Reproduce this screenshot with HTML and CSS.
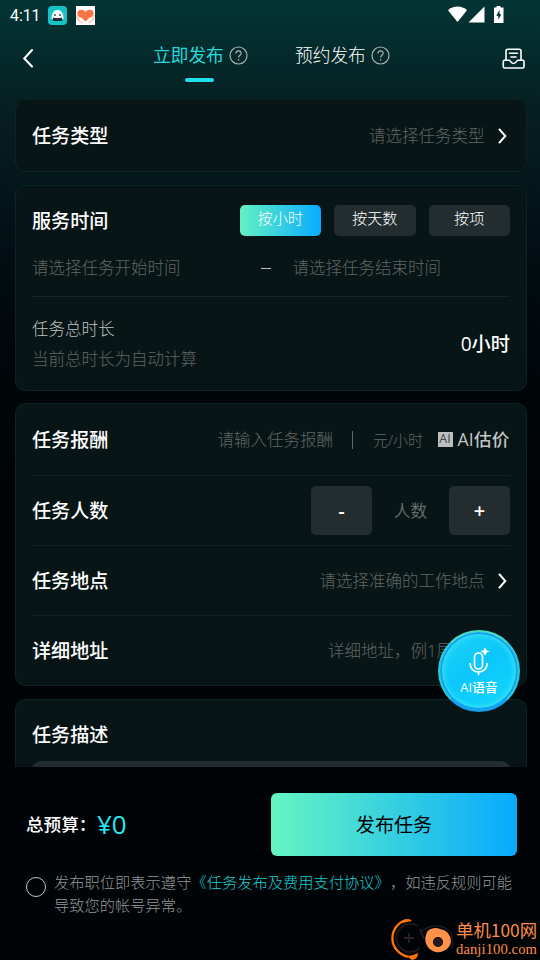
FILE: index.html
```html
<!DOCTYPE html>
<html lang="zh-CN">
<head>
<meta charset="utf-8">
<title>发布任务</title>
<link rel="stylesheet" href="styles.css">
</head>
<body>
<div class="screen">
  <div class="status">
    <span class="clock">4:11</span>
    <svg class="app-icon" width="19" height="19" viewBox="0 0 19 19"><rect width="19" height="19" rx="4" fill="#15c3c5"/><path d="M3.500 12.500C3.500 7 6 4 9.500 4S15.500 7 15.500 12.500L13 14H6Z" fill="#fff"/><path d="M5.300 11.500Q9.500 13 13.700 11.500L14.500 15H4.500Z" fill="#12292b"/><path d="M7 8v2M12 8v2" stroke="#12292b" stroke-width="1.200"/></svg>
    <svg class="app-icon app-heart" width="19" height="19" viewBox="0 0 19 19"><rect width="19" height="19" fill="#fff"/><path d="M9.500 15.500C6 12.500 1.300 11 1.300 7 1.300 3 7.500 2.500 9.500 6 11.500 2.500 17.700 3 17.700 7 17.700 11 13 12.500 9.500 15.500Z" fill="#f97445"/><path d="M1 9C1 12 2 15 6.500 17M18 9C18 12 17 15 12.500 17" stroke="#fbb596" stroke-width="1.200" fill="none"/><path d="M4.500 11.500 8 15 7.500 18M14.500 11.500 11 15 11.500 18" stroke="#fff" stroke-width="1.100" fill="none"/></svg>
    <svg class="signals" width="58" height="18" viewBox="0 0 58 18"><path d="M0 4.200C5 -.6 14 -.6 19 4.200L9.500 16Z" fill="#fff"/><path d="M20.500 16.500 36.500 .5V16.500Z" fill="#fff"/><path d="M48.500 0h4v1.500h3V17h-9.500V1.500h2.500Z" fill="#fff"/><path d="M51.500 4 48.300 9.700H50.300V13.700L53.300 8.200H51.500Z" fill="#07292a"/></svg>
  </div>
  <header class="nav">
    <svg class="back" width="14" height="20" viewBox="0 0 14 20"><path d="M12 2 4.300 10.500 12 18.500" fill="none" stroke="#fff" stroke-width="2.100" stroke-linecap="round"/></svg>
    <div class="tab tab-on"><span>立即发布</span><svg width="19" height="19" viewBox="0 0 19 19"><circle cx="9.500" cy="9.500" r="8.500"/><path d="M6.900 7.600C6.900 3.900 12.200 4.100 12.200 7.300 12.200 9.300 9.600 9.300 9.600 11.500"/><path d="M9.600 13v1.600"/></svg></div>
    <div class="tab"><span>预约发布</span><svg width="19" height="19" viewBox="0 0 19 19"><circle cx="9.500" cy="9.500" r="8.500"/><path d="M6.900 7.600C6.900 3.900 12.200 4.100 12.200 7.300 12.200 9.300 9.600 9.300 9.600 11.500"/><path d="M9.600 13v1.600"/></svg></div>
    <svg class="inbox" width="24" height="22" viewBox="0 0 24 22"><path d="M4 12.300V3Q4 1.200 5.800 1.200H17.200Q19 1.200 19 3V12.300M7.500 5.300H15.500M9 9H14M1.300 13.500Q1.300 12.300 2.500 12.300H7.200C8.500 12.300 8.500 15.500 11.500 15.500S14.500 12.300 15.800 12.300H20.800Q22 12.300 22 13.500V18.500Q22 20 20.500 20H2.800Q1.300 20 1.300 18.500Z"/></svg>
  </header>

  <main class="form">
    <section class="card card-type">
      <h2>任务类型</h2>
      <span class="hint">请选择任务类型</span>
      <svg class="chev" width="9" height="16" viewBox="0 0 9 16"><path d="M1 .8 7.300 8 1 15.200"/></svg>
    </section>

    <section class="card card-time">
      <div class="time-head">
        <h2>服务时间</h2>
        <button class="chip chip-on">按小时</button>
        <button class="chip">按天数</button>
        <button class="chip">按项</button>
      </div>
      <div class="range"><span class="hint">请选择任务开始时间</span><i class="dash"></i><span class="hint">请选择任务结束时间</span></div>
      <div class="total">
        <div class="total-text"><p>任务总时长</p><p class="hint">当前总时长为自动计算</p></div>
        <strong>0小时</strong>
      </div>
    </section>

    <section class="card card-detail">
      <div class="row"><h2>任务报酬</h2><span class="hint">请输入任务报酬</span><i class="bar"></i><span class="hint unit">元/小时</span><span class="ai-box">AI</span><span class="ai-text">AI估价</span></div>
      <div class="row"><h2>任务人数</h2><button class="step">-</button><span class="count">人数</span><button class="step">+</button></div>
      <div class="row"><h2>任务地点</h2><span class="hint">请选择准确的工作地点</span><svg class="chev" width="9" height="16" viewBox="0 0 9 16"><path d="M1 .8 7.300 8 1 15.200"/></svg></div>
      <div class="row"><h2>详细地址</h2><span class="hint address">详细地址，例1层101室</span></div>
    </section>

    <section class="card card-desc"><h2>任务描述</h2><div class="area"></div></section>
  </main>

  <footer class="foot">
    <div class="pay"><span class="budget">总预算：</span><span class="price">¥0</span><button class="submit">发布任务</button></div>
    <div class="agree"><i class="radio"></i><p>发布职位即表示遵守<a>《任务发布及费用支付协议》</a>，如违反规则可能导致您的帐号异常。</p></div>
  </footer>

  <div class="voice">
    <svg width="24" height="30" viewBox="0 0 24 30"><rect x="7.500" y="5" width="8" height="16" rx="4"/><path d="M3.200 15.500C3.200 27 20 27 20 15.500M11.600 24.500V26.500"/><path class="spark" d="M18 -.8 19.500 2.200 22.500 3.500 19.500 4.800 18 7.800 16.500 4.800 13.500 3.500 16.500 2.200Z"/></svg>
    <span>AI语音</span>
  </div>

  <div class="mark">
    <svg width="64" height="43" viewBox="0 0 64 43"><g fill="none"><path d="M28 9A14 14 0 1 0 30 31" stroke="#1e1718" stroke-width="2"/><path d="M30 12Q32 17 34 22M19 16v10M14 21h10" stroke="#2b2020" stroke-width="1.800"/><path d="M32 14Q46 4 58 13Q64 18 62 31" stroke="#20191a" stroke-width="1.500"/><path d="M16 3C-2 9 -3 34 18 40" stroke="#ff7408" stroke-width="2.300"/></g><path d="M10 6Q18 -1 22 4L12 6ZM15 38Q21 40 28 36Q28 42 22 43Z" fill="#ff7408"/><path fill-rule="evenodd" d="M41 12Q46 10 50 12Q61 14 61 25A13 13 0 1 1 36 18Q37 13 41 12ZM48 20A5 5 0 1 0 48 30A5 5 0 1 0 48 20Z" fill="#ff9148"/><circle cx="48" cy="25" r="4.300" fill="#281a18"/></svg>
    <div class="mark-text"><b>单机100网</b><span>danji100.com</span></div>
  </div>
</div>
</body>
</html>
```
FILE: styles.css
```css
* { box-sizing: border-box; margin: 0; padding: 0; }
body { background: #000407; }
button { border: 0; font: inherit; color: inherit; }
.screen {
  position: relative;
  width: 540px;
  height: 960px;
  overflow: hidden;
  display: flex;
  flex-direction: column;
  font-family: "Open Sans", "Noto Sans CJK SC", sans-serif;
  font-weight: 300;
  font-size: 16.5px;
  line-height: 24px;
  white-space: nowrap;
  text-spacing-trim: space-all;
  color: #fff;
  background: linear-gradient(#033535 0, #042b2c 50px, #062022 100px, #04171b 180px, #020d12 260px, #000609 360px, #000407 480px);
}
.status { height: 32px; display: flex; align-items: center; padding-left: 10px; }
.clock { width: 38px; font: 400 15.8px/20px Roboto, sans-serif; }
.app-icon { margin-top: -1px; }
.app-heart { margin-left: 9px; }
.signals { margin: -3px 0 0 353px; }
.nav { height: 68px; display: flex; padding-left: 20px; }
.back { margin: 16px 119px 0 0; }
.tab { position: relative; height: 48px; width: 96px; display: flex; gap: 5px; align-items: center; font-size: 17.7px; margin-right: 46px; }
.tab span { margin-top: -2px; }
.tab svg { flex: none; margin-top: -1px; fill: none; stroke: #a7b2b2; stroke-width: 1.2; }
.tab-on { color: #24d9dc; font-weight: 400; }
.tab-on::after { content: ""; position: absolute; left: 32px; top: 46px; width: 29px; height: 4px; border-radius: 2px; background: #21dfe6; }
.inbox { margin: 16px 0 0 65px; fill: none; stroke: #fff; stroke-width: 1.6; stroke-linecap: round; }
.form { height: 667px; overflow: hidden; padding: 0 13px 0 15px; display: flex; flex-direction: column; }
.card { flex: none; border: 1px solid #0a2523; border-radius: 10px; background: #081516; padding: 0 16px; }
h2 { font-size: 19.1px; font-weight: 500; line-height: 28px; margin-right: auto; }
.hint { color: #606565; }
.chev { fill: none; stroke: #fff; stroke-width: 2; margin-left: 13.5px; margin-right: 3px; }
.card-type { height: 72px; margin-bottom: 13px; display: flex; align-items: center; border-top-color: #081516; }
.card-time { height: 206px; margin-bottom: 12px; }
.time-head { height: 69px; display: flex; align-items: center; }
.chip { width: 81.5px; height: 31px; margin-left: 13px; border-radius: 5px; background: #232d2f; font-size: 15.2px; line-height: 27px; padding-bottom: 4px; }
.chip-on { background: linear-gradient(90deg, #62f2c2, #0aabff); }
.range { height: 42px; display: flex; padding-top: 1px; border-bottom: 1px solid #172425; }
.dash { width: 10px; height: 1px; margin: 12px 22px 0 80px; background: #bbc0c0; }
.total { height: 93px; display: flex; align-items: center; justify-content: space-between; }
.total-text p { line-height: 30px; }
.total-text p:first-child { color: #bdc2c2; }
.total strong { font-size: 19.2px; font-weight: 500; }
.card-detail { height: 283px; margin-bottom: 13px; }
.row { height: 70px; display: flex; align-items: center; border-bottom: 1px solid #142122; }
.row:first-child { height: 72px; }
.row:last-child { border: 0; }
.bar { width: 1px; height: 18px; background: #626868; margin: 0 20px 0 19px; }
.unit { font-size: 15px; width: 51.5px; }
.ai-box { width: 15px; height: 15px; margin: 0 5px 0 13px; background: #bcbfc0; color: #424a4b; font-size: 12.5px; line-height: 14px; text-align: center; font-weight: 400; }
.ai-text { margin-top: -1px; color: #c1c4c4; font-size: 17.6px; font-weight: 500; width: 52.5px; letter-spacing: .2px; }
.step { width: 61px; height: 49px; border-radius: 5px; background: #232d2f; font-size: 20px; font-weight: 600; }
.count { width: 77px; text-align: center; color: #666c6c; font-weight: 400; }
.address { width: 182px; }
.card-desc { height: 200px; padding-top: 21px; }
.area { height: 100px; margin-top: 12px; border-radius: 9px; background: #232d2f; }
.foot { flex: 1; padding: 26px 23px 0 26px; }
.pay { height: 63px; display: flex; align-items: center; }
.budget { width: 71px; margin-top: -2px; font-size: 17.6px; font-weight: 500; }
.price { margin-top: -2px; color: #2be7f3; font-size: 26px; font-weight: 400; }
.submit { width: 246px; height: 63px; margin-left: auto; border-radius: 6px; background: linear-gradient(90deg, #65f5c2, #07aaff); color: #000; font-size: 19.1px; font-weight: 400; }
.agree { display: flex; margin-top: 15px; }
.radio { width: 20px; height: 20px; border: 1px solid #c2c7c8; border-radius: 50%; margin: 6px 8px 0 0; }
.agree p { width: 463px; font-size: 15.28px; line-height: 23px; color: #939899; white-space: normal; }
.agree a { color: #16d0d4; }
.voice {
  position: absolute; left: 438px; top: 630px; width: 82px; height: 82px; border-radius: 50%;
  display: flex; flex-direction: column; align-items: center; padding-top: 16px;
  border: 2px solid #25cdda; border-top-color: #49dcc2; border-bottom-color: #109eee;
  background: linear-gradient(145deg, #20d5f4, #0bc6fb 45%, #14d9fa);
  box-shadow: inset 0 0 0 2px #169ff0, inset 0 0 5px 3px #40e6f5;
}
.voice svg { overflow: visible; fill: none; stroke: #fff; stroke-width: 1.7; stroke-linecap: round; }
.voice .spark { fill: #fff; stroke: none; }
.voice span { font-size: 12.8px; line-height: 18px; font-weight: 500; }
.mark { position: absolute; left: 390px; top: 917px; display: flex; }
.mark-text { display: flex; flex-direction: column; color: #ff8c46; margin-left: 2px; }
.mark-text b { font: 400 17.4px/24px "Noto Sans CJK SC", sans-serif; margin-top: 1px; }
.mark-text span { font: 14.6px/16px "Liberation Serif", serif; letter-spacing: .1px; margin-top: -1px; }
```
